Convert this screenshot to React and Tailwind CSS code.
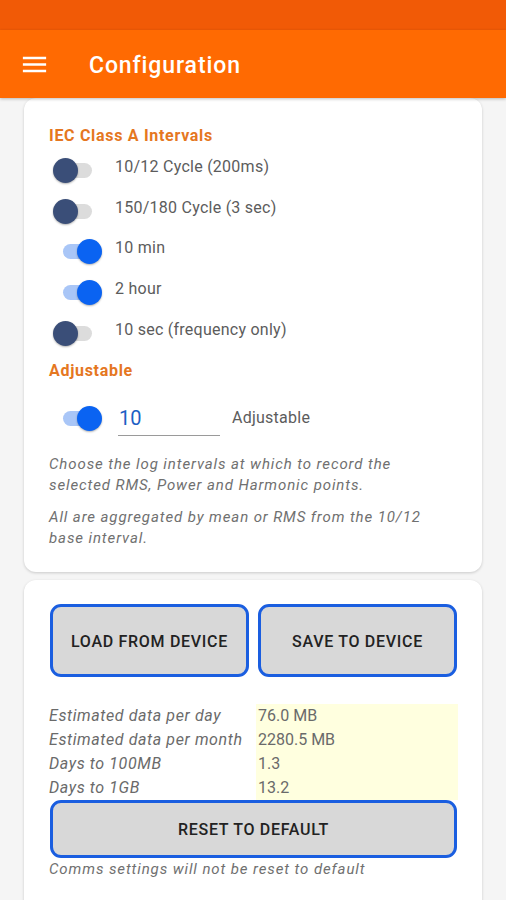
import React, { useState } from 'react';

const Toggle = ({ on }) => (
  <div className="relative w-[50px] h-[40px] shrink-0">
    {on ? (
      <>
        <div className="absolute left-[10px] top-[13px] w-[37px] h-[15px] rounded-full bg-[#a9c6f7]" />
        <div className="absolute left-[24px] top-[8px] w-[25px] h-[25px] rounded-full bg-[#0a63f2] shadow-[0_1px_2px_rgba(0,0,0,0.3)]" />
      </>
    ) : (
      <>
        <div className="absolute left-[5px] top-[13px] w-[34px] h-[15px] rounded-full bg-[#dcdcdc]" />
        <div className="absolute left-0 top-[8px] w-[25px] h-[25px] rounded-full bg-[#3a4e78] shadow-[0_1px_2px_rgba(0,0,0,0.3)]" />
      </>
    )}
  </div>
);

const ToggleRow = ({ on, label }) => (
  <div className="flex items-center h-[40.6px] pl-[4px]">
    <Toggle on={on} />
    <span className="ml-[12px] -mt-[6px] text-[16px] tracking-[0.25px] text-[#5c5c5c]">{label}</span>
  </div>
);

const Stat = ({ label, value }) => (
  <div className="flex h-[24px] items-center">
    <div className="w-[207px] italic tracking-[0.6px] text-[#6a6a6a]">{label}</div>
    <div className="flex-1 h-full flex items-center pl-[2px] bg-[#ffffdf] text-[#6a6a6a]">{value}</div>
  </div>
);

const BigButton = ({ children, className = '' }) => (
  <button
    type="button"
    className={`border-[3px] border-[#1a5ee0] bg-[#d8d8d8] rounded-[11px] pt-[3px] text-[16px] font-medium tracking-[0.7px] text-[#222] uppercase ${className}`}
  >
    {children}
  </button>
);

export default function App() {
  const [interval, setInterval] = useState('10');

  return (
    <div className="w-[506px] h-[900px] overflow-hidden bg-[#f5f5f5] font-['Roboto',sans-serif]">
      <div className="h-[30px] bg-[#f15a06]" />
      <div className="h-[68px] bg-[#ff6a02] flex items-center shadow-[0_1px_3px_rgba(0,0,0,0.25)] relative z-10">
        <svg className="ml-[19px] w-[31px] h-[31px]" viewBox="0 0 24 24" fill="#fff">
          <path d="M3 18h18v-2H3v2zm0-5h18v-2H3v2zm0-7v2h18V6H3z" />
        </svg>
        <h1 className="ml-[39px] mt-[4px] text-[23px] font-medium tracking-[0.9px] text-white">Configuration</h1>
      </div>

      <div className="pl-[24px] pr-[24px]">
        <div className="bg-white rounded-[12px] shadow-[0_1px_3px_rgba(0,0,0,0.18)] pt-[28px] pb-[23px] pl-[25px] pr-[24px]">
          <h2 className="h-[20px] leading-[20px] text-[16px] font-bold tracking-[0.7px] text-[#e5771f]">IEC Class A Intervals</h2>
          <div className="mt-[4px]">
            <ToggleRow on={false} label="10/12 Cycle (200ms)" />
            <ToggleRow on={false} label="150/180 Cycle (3 sec)" />
            <ToggleRow on label="10 min" />
            <ToggleRow on label="2 hour" />
            <ToggleRow on={false} label="10 sec (frequency only)" />
          </div>
          <h2 className="mt-[8px] h-[20px] leading-[20px] text-[16px] font-bold tracking-[0.7px] text-[#e5771f]">Adjustable</h2>
          <div className="mt-[17px] flex items-center h-[40px] pl-[4px]">
            <Toggle on />
            <input
              value={interval}
              onChange={(e) => setInterval(e.target.value)}
              className="ml-[15px] w-[102px] h-[34px] pl-[1px] text-[20px] text-[#1c60c4] border-b border-[#9a9a9a] outline-none bg-transparent mt-[2px]"
            />
            <span className="ml-[12px] text-[16px] tracking-[0.25px] text-[#5c5c5c]">Adjustable</span>
          </div>
          <p className="mt-[16px] max-w-[372px] text-[15px] leading-[21px] italic tracking-[0.9px] text-[#707070]">
            Choose the log intervals at which to record the selected RMS, Power and Harmonic points.
          </p>
          <p className="mt-[11px] max-w-[372px] text-[15px] leading-[21px] italic tracking-[0.9px] text-[#707070]">
            All are aggregated by mean or RMS from the 10/12 base interval.
          </p>
        </div>

        <div className="mt-[8px] bg-white rounded-t-[12px] shadow-[0_1px_3px_rgba(0,0,0,0.18)] pt-[24px] pb-[40px] pl-[25px] pr-[24px]">
          <div className="flex gap-[9px] pl-[1px]">
            <BigButton className="w-[199px] h-[73px]">Load from device</BigButton>
            <BigButton className="w-[199px] h-[73px]">Save to device</BigButton>
          </div>
          <div className="mt-[27px] text-[16px]">
            <Stat label="Estimated data per day" value="76.0 MB" />
            <Stat label="Estimated data per month" value="2280.5 MB" />
            <Stat label="Days to 100MB" value="1.3" />
            <Stat label="Days to 1GB" value="13.2" />
          </div>
          <BigButton className="w-[407px] h-[58px] ml-[1px]">Reset to default</BigButton>
          <p className="mt-[1px] text-[15px] leading-[20px] italic tracking-[0.9px] text-[#707070]">
            Comms settings will not be reset to default
          </p>
        </div>
      </div>
    </div>
  );
}
